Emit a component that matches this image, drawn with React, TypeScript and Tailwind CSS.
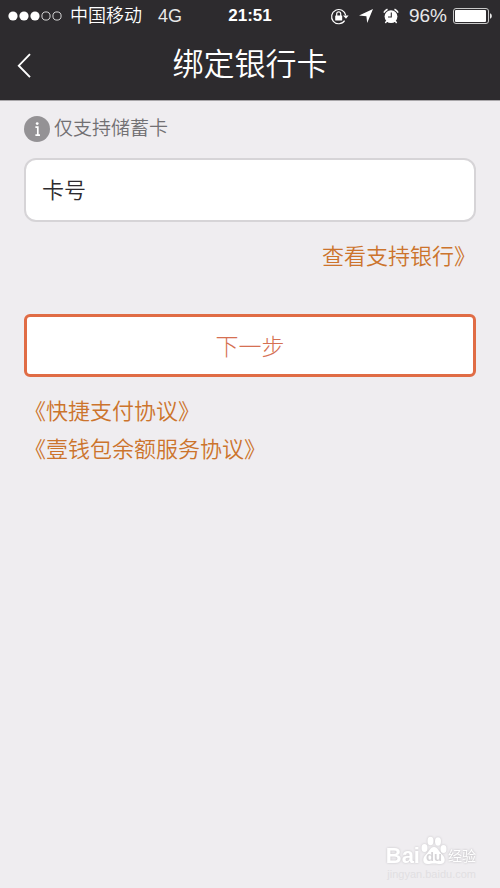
import type { ReactNode } from "react"

const agreements = [
  { label: "《快捷支付协议》", href: "#quick-pay" },
  { label: "《壹钱包余额服务协议》", href: "#balance-service" },
]

function SignalDots() {
  return (
    <svg width="54" height="12" viewBox="0 0 54 12" aria-hidden="true">
      {[5, 16, 27].map((cx) => (
        <circle key={cx} cx={cx} cy="6" r="4.6" fill="#fff" />
      ))}
      {[38, 49].map((cx) => (
        <circle key={cx} cx={cx} cy="6" r="4.1" fill="none" stroke="#e8e8e8" strokeWidth="0.9" />
      ))}
    </svg>
  )
}

function RotationLockIcon() {
  return (
    <svg width="19" height="17" viewBox="0 0 19 17" fill="none" aria-hidden="true">
      <path d="M14.6 12.6A7.1 7.1 0 1 1 15.7 7.4" stroke="#fff" strokeWidth="1.2" />
      <path d="M13 7.4h5.6L16 10.8z" fill="#fff" />
      <rect x="5.2" y="7.4" width="7" height="5" rx="0.5" fill="#fff" />
      <path d="M6.7 8V5.8a2 2 0 0 1 4 0V8" stroke="#fff" strokeWidth="1.2" />
    </svg>
  )
}

function LocationIcon() {
  return (
    <svg width="14" height="14" viewBox="0 0 14 14" aria-hidden="true">
      <path d="M14 0L8.2 14L7.4 7.2L0 6.6z" fill="#fff" />
    </svg>
  )
}

function AlarmIcon() {
  return (
    <svg width="16" height="16" viewBox="0 0 16 16" fill="none" aria-hidden="true">
      <circle cx="8" cy="8.6" r="6.4" fill="#fff" />
      <path d="M0.9 4.6A8 8 0 0 1 4.5 1.2M15.1 4.6A8 8 0 0 0 11.5 1.2" stroke="#fff" strokeWidth="1.5" />
      <path d="M3.8 12.8L2.4 15M12.2 12.8l1.4 2.2" stroke="#fff" strokeWidth="1.4" />
      <path d="M8.3 4.4v4.6H5" stroke="#2d2b2e" strokeWidth="1.1" />
    </svg>
  )
}

function BatteryIcon() {
  return (
    <svg width="39" height="16" viewBox="0 0 39 16" aria-hidden="true">
      <rect x="0.5" y="0.5" width="35" height="15" rx="2.5" fill="none" stroke="#c9c9c9" />
      <rect x="2" y="2" width="31" height="12" rx="1" fill="#fff" />
      <path d="M37 5.2c1.2.5 1.8 1.5 1.8 2.8s-.6 2.3-1.8 2.8z" fill="#e8e8e8" />
    </svg>
  )
}

function StatusBar() {
  return (
    <div className="grid h-8 grid-cols-[1fr_auto_1fr] items-center px-2">
      <div className="flex items-center whitespace-nowrap text-lg leading-8">
        <SignalDots />
        <span className="ml-2 font-[350]">中国移动</span>
        <span className="ml-4 text-[#e8e8e8]">4G</span>
      </div>
      <time className="text-[17px] font-bold leading-8">21:51</time>
      <div className="flex items-center justify-end">
        <RotationLockIcon />
        <span className="ml-2.5">
          <LocationIcon />
        </span>
        <span className="ml-2.5">
          <AlarmIcon />
        </span>
        <span className="ml-2.5 text-[19px] leading-8 text-[#e8e8e8]">96%</span>
        <span className="ml-1.5">
          <BatteryIcon />
        </span>
      </div>
    </div>
  )
}

function Header() {
  return (
    <header className="border-b border-[#a9a7aa] bg-[#2d2b2e] text-white">
      <StatusBar />
      <div className="grid h-17 grid-cols-[48px_1fr_48px] items-center pb-0.5">
        <button type="button" aria-label="返回" className="flex h-12 items-center pl-4">
          <svg width="15" height="25" viewBox="0 0 15 25" fill="none" aria-hidden="true">
            <path d="M14 1.2L2.8 12.7L14 24.2" stroke="#fff" strokeWidth="1.9" />
          </svg>
        </button>
        <h1 className="text-center text-[31px] font-[350] leading-10">绑定银行卡</h1>
      </div>
    </header>
  )
}

function TextLink({ href, children }: { href: string; children: ReactNode }) {
  return (
    <a href={href} className="text-[22px] font-[350] leading-[38px] text-[#cc742c]">
      {children}
    </a>
  )
}

function Watermark() {
  return (
    <footer className="mt-auto flex flex-col items-end pr-6 pb-2 text-white">
      <div className="flex h-9 items-end">
        <span className="text-[22px] font-bold leading-6 drop-shadow-[0_0_1px_#c4c2c5]">Bai</span>
        <svg width="28" height="30" viewBox="0 0 28 30" className="mb-0.5 drop-shadow-[0_0_1px_#c4c2c5]">
          <ellipse cx="4.5" cy="12" rx="3" ry="4" fill="#fff" />
          <ellipse cx="10.5" cy="5" rx="3" ry="4.2" fill="#fff" />
          <ellipse cx="18" cy="5.5" rx="3" ry="4.2" fill="#fff" />
          <ellipse cx="23.5" cy="13" rx="3" ry="4" fill="#fff" />
          <path d="M14 11c4 0 5 5 8.5 8s3 9-2 9c-3 0-4-.6-6.5-.6S10 28 7.5 28c-5 0-5.5-6-2-9S10 11 14 11z" fill="#fff" />
          <text x="14" y="25" textAnchor="middle" fontSize="13" fontWeight="bold" fill="#d6d4d7">
            du
          </text>
        </svg>
        <span className="text-[14px] leading-6 drop-shadow-[0_0_1px_#b4b2b5]">经验</span>
      </div>
      <span className="text-[11px] leading-3 text-[#e1dfe2]">jingyan.baidu.com</span>
    </footer>
  )
}

export default function App() {
  return (
    <div className="flex min-h-screen flex-col bg-[#efedf0] font-['Liberation_Sans','Noto_Sans_CJK_SC',sans-serif]">
      <Header />
      <main className="flex flex-col px-6 pt-[14px]">
        {/* Card type hint */}
        <p className="flex items-center gap-1 text-[19px] font-[350] leading-7 text-[#727073]">
          <svg width="26" height="26" viewBox="0 0 26 26" aria-hidden="true">
            <circle cx="13" cy="13" r="13" fill="#949295" />
            <circle cx="13.2" cy="7.6" r="1.4" fill="#fff" />
            <path d="M11.4 11.2h2.4v7.800M11.4 19.2h4.600" stroke="#fff" strokeWidth="1.7" fill="none" />
          </svg>
          仅支持储蓄卡
        </p>

        {/* Card number */}
        <div className="mt-[15px] flex h-16 items-center rounded-xl border-2 border-[#d6d4d7] bg-white px-4 text-[22px] text-[#2d2b2e]">
          <label htmlFor="card-number" className="font-[350]">
            卡号
          </label>
          <input
            id="card-number"
            type="text"
            inputMode="numeric"
            className="ml-4 h-full min-w-0 flex-1 bg-transparent outline-none"
          />
        </div>

        <div className="mt-4 h-[38px] text-right">
          <TextLink href="#banks">查看支持银行》</TextLink>
        </div>

        <button
          type="button"
          className="mt-[38px] h-[63px] rounded-md border-3 border-[#e06c45] bg-white pt-1 text-[23px] font-light text-[#d57052]"
        >
          下一步
        </button>

        <ul className="mt-4">
          {agreements.map((item) => (
            <li key={item.href} className="h-[38px]">
              <TextLink href={item.href}>{item.label}</TextLink>
            </li>
          ))}
        </ul>
      </main>
      <Watermark />
    </div>
  )
}
